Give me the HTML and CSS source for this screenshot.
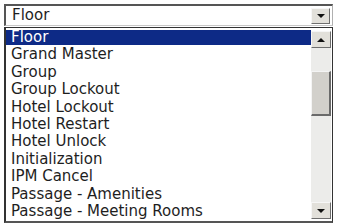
FILE: index.html
```html
<!DOCTYPE html>
<html lang="en">
<head>
    <meta charset="UTF-8">
    <title>Lock Type</title>
    <link rel="stylesheet" href="styles.css">
</head>
<body>
    <div class="picker">
        <!-- Closed combo box -->
        <div class="combo">
            <span class="combo-value">Floor</span>
            <span class="btn"><span class="arrow down"></span></span>
        </div>

        <!-- Open drop-down list -->
        <div class="dropdown">
            <ul class="options">
                <li class="selected">Floor</li>
                <li>Grand Master</li>
                <li>Group</li>
                <li>Group Lockout</li>
                <li>Hotel Lockout</li>
                <li>Hotel Restart</li>
                <li>Hotel Unlock</li>
                <li>Initialization</li>
                <li>IPM Cancel</li>
                <li>Passage - Amenities</li>
                <li>Passage - Meeting Rooms</li>
            </ul>
            <div class="scrollbar">
                <span class="btn"><span class="arrow up"></span></span>
                <div class="track">
                    <div class="thumb"></div>
                </div>
                <span class="btn"><span class="arrow down"></span></span>
            </div>
        </div>
    </div>
</body>
</html>
```

FILE: styles.css
```css
body {
    margin: 0;
    padding: 0;
    background-color: #fff;
    font-family: "DejaVu Sans", Verdana, sans-serif;
    font-size: 15px;
    color: #1e1e1e;
}
.picker {
    padding: 4px 4px 0 4px;
    width: 329px;
}
.combo {
    display: flex;
    align-items: center;
    height: 17px;
    border-top: 2px solid #555;
    border-left: 2px solid #555;
    border-right: 1px solid #b0b0b0;
    border-bottom: 1px solid #c8c8c8;
    padding: 1px 1px 1px 6px;
}
.combo-value {
    flex: 1;
    line-height: 17px;
}
.btn {
    display: flex;
    align-items: center;
    justify-content: center;
    width: 19px;
    height: 16px;
    background-color: #e2e0da;
    border-top: 1px solid #f6f6f6;
    border-left: 1px solid #f6f6f6;
    border-right: 1px solid #6e6e6e;
    border-bottom: 1px solid #6e6e6e;
    box-sizing: border-box;
}
.combo .btn {
    margin-right: 1px;
}
.arrow {
    width: 0;
    height: 0;
    border-left: 4px solid transparent;
    border-right: 4px solid transparent;
}
.arrow.down {
    border-top: 4px solid #111;
}
.arrow.up {
    border-bottom: 4px solid #111;
}
.dropdown {
    display: flex;
    margin-top: 1px;
    height: 193px;
    border: 1px solid #333;
    border-left-width: 2px;
    border-bottom: 2px solid #555;
}
.options {
    flex: 1;
    list-style: none;
    margin: 0;
    padding: 1px 0 0 0;
}
.options li {
    height: 17.4px;
    line-height: 16px;
    padding-left: 5px;
    white-space: nowrap;
}
.options li.selected {
    height: 15px;
    margin: 1px 0 1.4px 0;
    line-height: 15px;
    background-color: #0d2a86;
    color: #fff;
}
.scrollbar {
    display: flex;
    flex-direction: column;
    width: 20px;
    padding: 3px 1px 2px 0;
}
.scrollbar .btn {
    width: 20px;
    height: 17px;
}
.track {
    flex: 1;
    background-color: #ececea;
}
.thumb {
    margin-top: 23px;
    height: 45px;
    background-color: #d2d0cb;
    border-top: 1px solid #f4f4f4;
    border-left: 1px solid #f4f4f4;
    border-right: 2px solid #6a6a6a;
    border-bottom: 2px solid #6a6a6a;
    box-sizing: border-box;
}
```
